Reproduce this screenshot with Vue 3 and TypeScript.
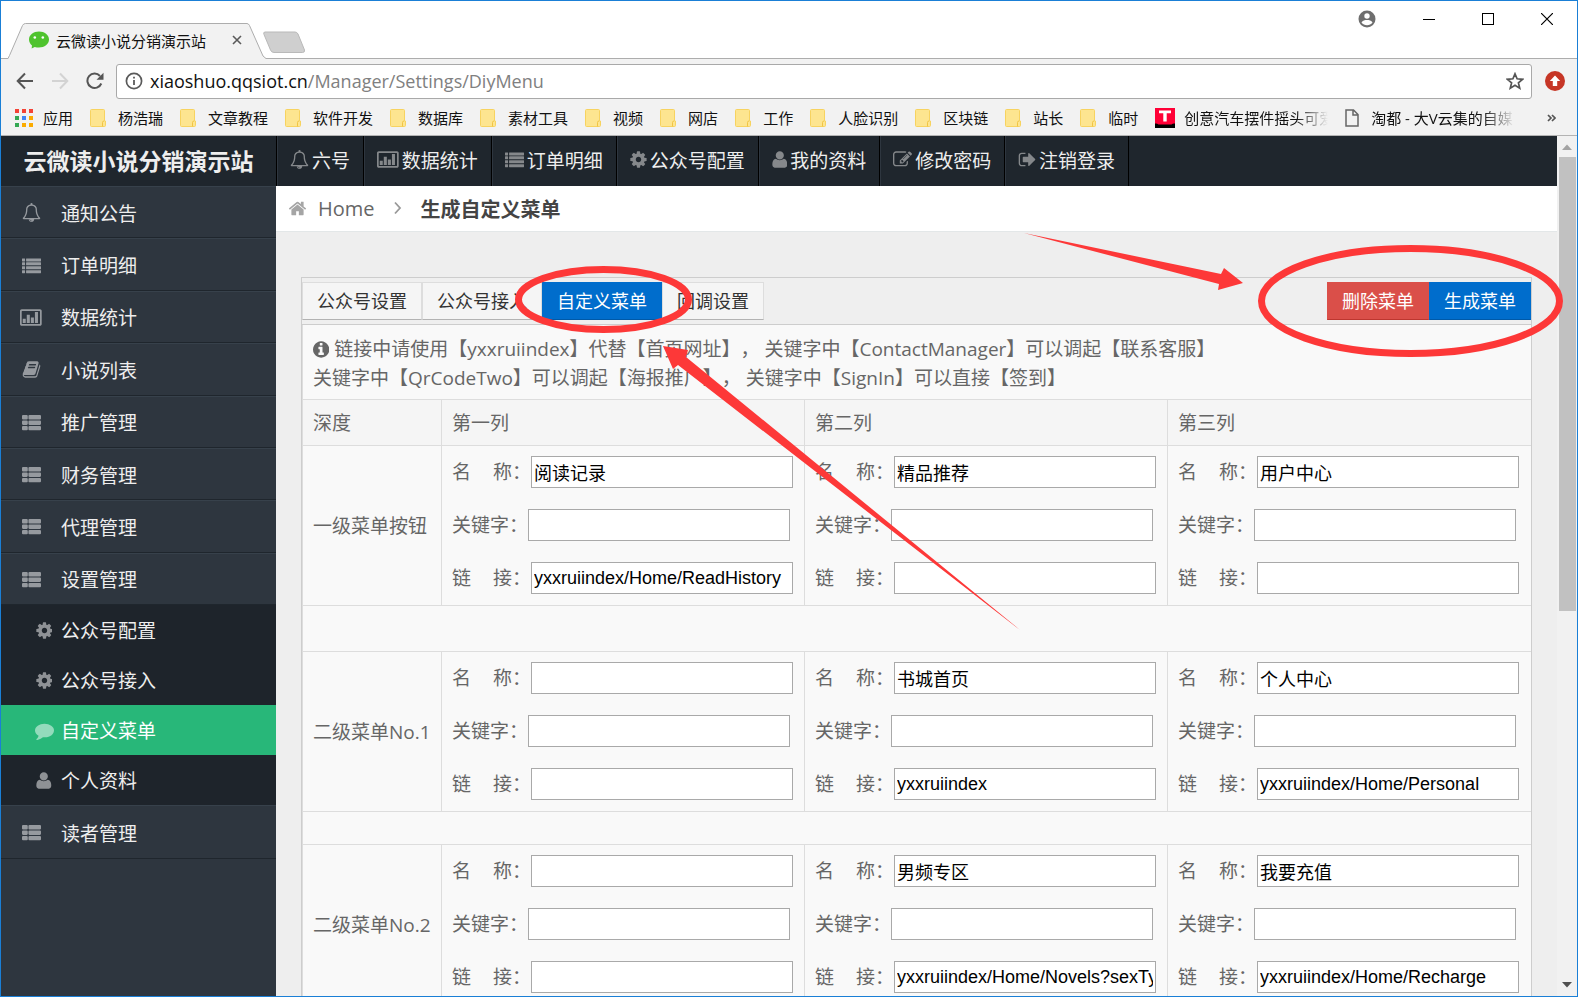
<script setup lang="ts">
import { ref } from 'vue'

interface Shape { x: number; w: number; d: string }

const icons: Record<string, Shape> = {
  bell: { x: 0, w: 1792, d: 'M912 1696q0-16-16-16-59 0-101.5-42.5t-42.5-101.5q0-16-16-16t-16 16q0 73 51.5 124.5t124.5 51.5q16 0 16-16zm-666-288h1300q-266-300-266-832 0-51-24-105t-69-103-121.5-80.5-169.5-31.5-169.5 31.5-121.5 80.5-69 103-24 105q0 532-266 832zm1482 0q0 52-38 90t-90 38h-448q0 106-75 181t-181 75-181-75-75-181h-448q-52 0-90-38t-38-90q50-42 91-88t85-119.5 74.5-158.5 50-206 19.5-260q0-152 117-282.5t307-158.5q-8-19-8-39 0-40 28-68t68-28 68 28 28 68q0 20-8 39 190 28 307 158.5t117 282.5q0 139 19.5 260t50 206 74.5 158.5 85 119.5 91 88z' },
  chart: { x: 0, w: 2048, d: 'M160 128h1728q66 0 113 47t47 113v1216q0 66-47 113t-113 47h-1728q-66 0-113-47t-47-113v-1216q0-66 47-113t113-47zm32 160q-32 0-32 32v1152q0 32 32 32h1664q32 0 32-32v-1152q0-32-32-32zm64 736h288v384h-288zm384-384h288v768h-288zm384 256h288v512h-288zm384-512h288v1024h-288z' },
  list: { x: 0, w: 1792, d: 'M32 224h224q32 0 32 32v224q0 32-32 32h-224q-32 0-32-32v-224q0-32 32-32zm384 0h1344q32 0 32 32v224q0 32-32 32h-1344q-32 0-32-32v-224q0-32 32-32zM32 594h224q32 0 32 32v224q0 32-32 32h-224q-32 0-32-32v-224q0-32 32-32zm384 0h1344q32 0 32 32v224q0 32-32 32h-1344q-32 0-32-32v-224q0-32 32-32zM32 964h224q32 0 32 32v224q0 32-32 32h-224q-32 0-32-32v-224q0-32 32-32zm384 0h1344q32 0 32 32v224q0 32-32 32h-1344q-32 0-32-32v-224q0-32 32-32zM32 1334h224q32 0 32 32v224q0 32-32 32h-224q-32 0-32-32v-224q0-32 32-32zm384 0h1344q32 0 32 32v224q0 32-32 32h-1344q-32 0-32-32v-224q0-32 32-32z' },
  thlist: { x: 0, w: 1792, d: 'M96 192h352q96 0 96 96v224q0 96-96 96h-352q-96 0-96-96v-224q0-96 96-96zm608 0h992q96 0 96 96v224q0 96-96 96h-992q-96 0-96-96v-224q0-96 96-96zM96 704h352q96 0 96 96v224q0 96-96 96h-352q-96 0-96-96v-224q0-96 96-96zm608 0h992q96 0 96 96v224q0 96-96 96h-992q-96 0-96-96v-224q0-96 96-96zM96 1216h352q96 0 96 96v224q0 96-96 96h-352q-96 0-96-96v-224q0-96 96-96zm608 0h992q96 0 96 96v224q0 96-96 96h-992q-96 0-96-96v-224q0-96 96-96z' },
  cog: { x: 96, w: 1600, d: 'M1152 896q0-106-75-181t-181-75-181 75-75 181 75 181 181 75 181-75 75-181zm512-109v222q0 12-8 23t-20 13l-185 28q-19 54-39 91 35 50 107 138 10 12 10 25t-9 23q-27 37-99 108t-94 71q-12 0-26-9l-138-108q-44 23-91 38-16 136-29 186-7 28-36 28h-222q-14 0-24.5-8.5t-11.5-21.5l-28-184q-49-16-90-37l-141 107q-10 9-25 9-14 0-25-11-126-114-165-168-7-10-7-23 0-12 8-23 15-21 51-66.5t54-70.5q-27-50-41-99l-183-27q-13-2-21-12.5t-8-23.5v-222q0-12 8-23t19-13l186-28q14-46 39-92-40-57-107-138-10-12-10-24 0-10 9-23 26-36 98.5-107.5t94.5-71.5q13 0 26 10l138 107q44-23 91-38 16-136 29-186 7-28 36-28h222q14 0 24.5 8.5t11.5 21.5l28 184q49 16 90 37l142-107q9-9 24-9 13 0 25 10 129 119 165 170 7 8 7 22 0 12-8 23-15 21-51 66.5t-54 70.5q26 50 41 98l183 28q13 2 21 12.5t8 23.5z' },
  user: { x: 160, w: 1472, d: 'M1600 1399q0 109-62.5 187t-150.5 78h-982q-88 0-150.5-78t-62.5-187q0-85 8.5-160.5t31.5-152 58.5-131 94-89 134.5-34.5q155 128 377 128t377-128q76 0 134.5 34.5t94 89 58.5 131 31.5 152 8.5 160.5zm-320-887q0 159-112.5 271.5t-271.5 112.5-271.5-112.5-112.5-271.5 112.5-271.5 271.5-112.5 271.5 112.5 112.5 271.5z' },
  edit: { x: 0, w: 1792, d: 'M888 1184l116-116-152-152-116 116v56h96v96h56zm440-720q-16-16-33 1l-350 350q-17 17-1 33t33-1l350-350q17-17 1-33zm80 594v190q0 119-84.5 203.5t-203.5 84.5h-832q-119 0-203.5-84.5t-84.5-203.5v-832q0-119 84.5-203.5t203.5-84.5h832q63 0 117 25 15 7 18 23 3 17-9 29l-49 49q-14 14-32 8-23-6-45-6h-832q-66 0-113 47t-47 113v832q0 66 47 113t113 47h832q66 0 113-47t47-113v-126q0-13 9-22l64-64q15-15 35-7t20 29zm-96-738l288 288-672 672h-288v-288zm444 132l-92 92-288-288 92-92q28-28 68-28t68 28l152 152q28 28 28 68t-28 68z' },
  signout: { x: 0, w: 1664, d: 'M704 1440q0 4 1 20t.5 26.5-3 23.5-10 19.5-20.5 6.5h-320q-119 0-203.5-84.5t-84.5-203.5v-704q0-119 84.5-203.5t203.5-84.5h320q13 0 22.5 9.5t9.5 22.5q0 4 1 20t.5 26.5-3 23.5-10 19.5-20.5 6.5h-320q-66 0-113 47t-47 113v704q0 66 47 113t113 47h312l11.5 1 11.5 3 8 5.5 7 9 2 13.5zm928-544q0 26-19 45l-544 544q-19 19-45 19t-45-19-19-45v-288h-448q-26 0-45-19t-19-45v-384q0-26 19-45t45-19h448v-288q0-26 19-45t45-19 45 19l544 544q19 19 19 45z' },
  book: { x: 0, w: 1792, d: 'M1703 478q40 57 18 129l-275 906q-19 64-76.5 107.5t-122.5 43.5h-923q-77 0-148.5-53.5t-99.5-131.5q-24-67-2-127 0-4 3-27t4-37q1-8-3-21.5t-3-19.5q2-11 8-21t16.5-23.5 16.5-23.5q23-38 45-91.5t30-91.5q3-10 .5-30t-.5-28q3-11 17-28t17-23q21-36 42-92t25-90q1-9-2.5-32t.5-28q4-13 22-30.5t22-22.5q19-26 42.5-84.5t27.5-96.5q1-8-3-25.5t-2-26.5q2-8 9-18t18-23 17-21q8-12 16.5-30.5t15-35 16-36 19.5-32 26.5-23.5 36-11.5 47.5 5.5l-1 3q38-9 51-9h761q74 0 114 56t18 130l-274 906q-36 119-71.5 153.5t-128.5 34.5h-869q-27 0-38 15-11 16-1 43 24 70 144 70h923q29 0 56-15.5t35-41.5l300-987q7-22 5-57 38 15 59 43zm-1064 2q-4 13 2 22.5t20 9.5h608q13 0 25.5-9.5t16.5-22.5l21-64q4-13-2-22.5t-20-9.5h-608q-13 0-25.5 9.5t-16.5 22.5zm-83 256q-4 13 2 22.5t20 9.5h608q13 0 25.5-9.5t16.5-22.5l21-64q4-13-2-22.5t-20-9.5h-608q-13 0-25.5 9.5t-16.5 22.5z' },
  comment: { x: 0, w: 1792, d: 'M1792 896q0 174-120 321.5t-326 233-450 85.5q-70 0-145-8-198 175-460 242-49 14-114 22-17 2-30.5-9t-17.5-29v-1q-3-4-.5-12t2-10 4.5-9.5l6-9 7-8.5 8-9q7-8 31-34.5t34.5-38 31-39.5 32.5-51 27-59 26-76q-157-89-247.5-220t-90.5-281q0-130 71-248.5t191-204.5 286-136.5 348-50.5 348 50.5 286 136.5 191 204.5 71 248.5z' },
  home: { x: 0, w: 1792, d: 'M1472 992v480q0 26-19 45t-45 19h-384v-384h-256v384h-384q-26 0-45-19t-19-45v-480q0-1 .5-3t.5-3l575-474 575 474q1 2 1 6zm223-69l-62 74q-8 9-21 11h-3q-13 0-21-7l-692-577-692 577q-12 8-24 7-13-2-21-11l-62-74q-8-10-7-23.5t11-21.5l719-599q32-26 76-26t76 26l244 204v-195q0-14 9-23t23-9h192q14 0 23 9t9 23v408l219 182q10 8 11 21.5t-7 23.5z' },
  info: { x: 128, w: 1536, d: 'M1152 1376v-160q0-14-9-23t-23-9h-96v-512q0-14-9-23t-23-9h-320q-14 0-23 9t-9 23v160q0 14 9 23t23 9h96v320h-96q-14 0-23 9t-9 23v160q0 14 9 23t23 9h448q14 0 23-9t9-23zm-128-896v-160q0-14-9-23t-23-9h-192q-14 0-23 9t-9 23v160q0 14 9 23t23 9h192q14 0 23-9t9-23zm640 416q0 209-103 385.5t-279.5 279.5-385.5 103-385.5-103-279.5-279.5-103-385.5 103-385.5 279.5-279.5 385.5-103 385.5 103 279.5 279.5 103 385.5z' },
}
const box = (name: string) => `${icons[name].x} 0 ${icons[name].w} 1792`

const folders = ['杨浩瑞', '文章教程', '软件开发', '数据库', '素材工具', '视频', '网店', '工作', '人脸识别', '区块链', '站长', '临时']
const appDots = ['#f44336', '#f44336', '#f44336', '#34a853', '#4285f4', '#fbab00', '#34a853', '#fbab00', '#fbab00']

const topNav = [
  { icon: 'bell', text: '六号' },
  { icon: 'chart', text: '数据统计' },
  { icon: 'list', text: '订单明细' },
  { icon: 'cog', text: '公众号配置' },
  { icon: 'user', text: '我的资料' },
  { icon: 'edit', text: '修改密码' },
  { icon: 'signout', text: '注销登录' },
]
const sideMain = [
  { icon: 'bell', text: '通知公告' },
  { icon: 'list', text: '订单明细' },
  { icon: 'chart', text: '数据统计' },
  { icon: 'book', text: '小说列表' },
  { icon: 'thlist', text: '推广管理' },
  { icon: 'thlist', text: '财务管理' },
  { icon: 'thlist', text: '代理管理' },
  { icon: 'thlist', text: '设置管理' },
]
const sideSub = [
  { icon: 'cog', text: '公众号配置' },
  { icon: 'cog', text: '公众号接入' },
  { icon: 'comment', text: '自定义菜单' },
  { icon: 'user', text: '个人资料' },
]
const activeSub = ref('自定义菜单')

const tabs = ['公众号设置', '公众号接入', '自定义菜单', '回调设置']
const activeTab = ref('自定义菜单')

const fields = [
  { key: 'name', parts: ['名', '称：'] },
  { key: 'word', parts: ['关键字：'] },
  { key: 'link', parts: ['链', '接：'] },
] as const

interface Entry { name: string; word: string; link: string }
interface Level { title: string; gap: 'none' | 'tall' | 'short'; cells: Entry[] }

const levels = ref<Level[]>([
  {
    title: '一级菜单按钮', gap: 'none', cells: [
      { name: '阅读记录', word: '', link: 'yxxruiindex/Home/ReadHistory' },
      { name: '精品推荐', word: '', link: '' },
      { name: '用户中心', word: '', link: '' },
    ],
  },
  {
    title: '二级菜单No.1', gap: 'tall', cells: [
      { name: '', word: '', link: '' },
      { name: '书城首页', word: '', link: 'yxxruiindex' },
      { name: '个人中心', word: '', link: 'yxxruiindex/Home/Personal' },
    ],
  },
  {
    title: '二级菜单No.2', gap: 'short', cells: [
      { name: '', word: '', link: '' },
      { name: '男频专区', word: '', link: 'yxxruiindex/Home/Novels?sexType=1' },
      { name: '我要充值', word: '', link: 'yxxruiindex/Home/Recharge' },
    ],
  },
])
</script>

<template>
  <div class="window">
    <div class="strip">
      <div class="tab">
        <svg class="tab-shape" width="258" height="36" viewBox="0 0 258 36">
          <path d="M0 36V35.500L1.500 32.500L14.500 2.500Q15.500 .5 17.500 .5H239Q240.500 .5 241.500 2.500L255 33L258 35.500V36Z" fill="#f2f2f2" />
          <path d="M0 35.500L1.500 32.500L14.500 2.500Q15.500 .5 17.500 .5H239Q240.500 .5 241.500 2.500L255 33L258 35.500" fill="none" stroke="#adadad" />
        </svg>
        <svg class="favicon" width="20" height="18" viewBox="0 0 20 18">
          <path d="M10 0.500C4.500 .5 0 4 0 8.500c0 2.500 1.200 4.400 3 5.900L2.600 17.500l3.200-1.600c1.300.4 2.700.6 4.200.6 5.500 0 10-3.500 10-8S15.500 .5 10 .5z" fill="#4fc32e" />
          <circle cx="5.800" cy="6.500" r="1.300" fill="#fff" /><circle cx="13.800" cy="6.500" r="1.300" fill="#fff" />
        </svg>
        <span class="tab-title">云微读小说分销演示站</span>
        <button class="bare" aria-label="关闭标签页">
          <svg width="10" height="10" viewBox="0 0 10 10"><path d="M1 1l8 8M9 1L1 9" stroke="#5a5a5a" stroke-width="1.600" /></svg>
        </button>
      </div>
      <button class="bare new-tab" aria-label="新标签页">
        <svg width="44" height="24" viewBox="0 0 44 24"><path d="M3 1H33Q35 1 36 3L42.500 19Q43 21.500 40.500 21.500H12Q9.500 21.500 8.500 19L2 3.500Q1 1 3 1Z" fill="#cfcfcf" stroke="#b9b9b9" /></svg>
      </button>
      <div class="controls">
        <button class="bare" aria-label="用户">
          <svg width="18" height="18" viewBox="0 0 18 18"><circle cx="9" cy="9" r="8.500" fill="#6e6e6e" /><circle cx="9" cy="6" r="2.700" fill="#fff" /><path d="M3.500 12.500C4.500 10.500 7 10 9 10s4.500.5 5.500 2.500C13.200 14.300 11.200 15.300 9 15.300S4.800 14.300 3.500 12.500z" fill="#fff" /></svg>
        </button>
        <button class="bare" aria-label="最小化"><svg width="12" height="12" viewBox="0 0 12 12"><path d="M0 6.500H12" stroke="#000" /></svg></button>
        <button class="bare" aria-label="最大化"><svg width="12" height="12" viewBox="0 0 12 12"><rect x=".5" y=".5" width="11" height="11" fill="none" stroke="#000" /></svg></button>
        <button class="bare" aria-label="关闭"><svg width="12" height="12" viewBox="0 0 12 12"><path d="M0 0L12 12M12 0L0 12" stroke="#000" stroke-width="1.200" /></svg></button>
      </div>
    </div>

    <div class="toolbar">
      <button class="bare" aria-label="后退"><svg width="18" height="18" viewBox="0 0 18 18"><path d="M17 9H2M9 1.500L1.700 9 9 16.500" fill="none" stroke="#555" stroke-width="2" /></svg></button>
      <button class="bare" aria-label="前进"><svg width="18" height="18" viewBox="0 0 18 18"><path d="M1 9H16M9 1.500L16.300 9 9 16.500" fill="none" stroke="#d3d3d3" stroke-width="2" /></svg></button>
      <button class="bare" aria-label="重新加载"><svg width="18" height="18" viewBox="0 0 18 18"><path d="M15.300 11.500A7.200 7.200 0 1 1 14 4" fill="none" stroke="#555" stroke-width="2" /><path d="M17.500 .8V7.800H10.500Z" fill="#555" /></svg></button>
      <div class="address">
        <svg width="18" height="18" viewBox="0 0 18 18"><circle cx="9" cy="9" r="7.600" fill="none" stroke="#5a5a5a" stroke-width="1.700" /><path d="M9 8v5M9 4.800v1.800" stroke="#5a5a5a" stroke-width="1.800" /></svg>
        <span class="url">xiaoshuo.qqsiot.cn<span class="path">/Manager/Settings/DiyMenu</span></span>
        <button class="bare" aria-label="收藏"><svg width="18" height="18" viewBox="0 0 18 18"><path d="M9 1.800l2.100 5 5.400.5-4.100 3.500 1.300 5.300L9 13.200l-4.700 2.900 1.300-5.300L1.500 7.300l5.400-.5z" fill="none" stroke="#555" stroke-width="1.700" /></svg></button>
      </div>
      <button class="bare" aria-label="更新"><svg width="20" height="20" viewBox="0 0 20 20"><circle cx="10" cy="10" r="10" fill="#c63626" /><path d="M10 4.500l5.200 5.500h-3v5H7.800v-5h-3z" fill="#fff" /></svg></button>
    </div>

    <div class="bookmarks">
      <a class="mark apps" href="#">
        <span class="dots"><i v-for="(c, i) in appDots" :key="i" :style="{ background: c }"></i></span>应用
      </a>
      <a v-for="f in folders" :key="f" class="mark" href="#">
        <svg width="16" height="18" viewBox="0 0 16 18"><path d="M1.500 .5H13.500Q14.500 .5 14.500 1.500V12h1v4.500q0 1-1 1H1.500q-1 0-1-1V1.500q0-1 1-1z" fill="#fde590" stroke="#f7d360" /><path d="M12.500 17.500V13.500Q12.500 12 14 12" fill="none" stroke="#f0c445" /></svg>{{ f }}
      </a>
      <a class="mark site" href="#">
        <svg width="20" height="20" viewBox="0 0 20 20"><rect width="20" height="20" fill="#ff0036" /><path d="M0 15.500Q2 15 3.500 16.500H16.500Q18 15 20 15.500V20H0z" fill="#000" /><path d="M4 2.500H16V5.300H11.700V13.500H8.300V5.300H4z" fill="#fff" /></svg><span class="fade long">创意汽车摆件摇头可爱</span>
      </a>
      <a class="mark site doc" href="#">
        <svg width="14" height="18" viewBox="0 0 14 18"><path d="M1 1H8.500L13 5.500V17H1zM8 1V6H13" fill="none" stroke="#666" stroke-width="1.500" /></svg><span class="fade">淘都 - 大V云集的自媒</span>
      </a>
      <button class="bare more" aria-label="更多书签"><svg width="9" height="8" viewBox="0 0 9 8"><path d="M1 1l3 3-3 3M5 1l3 3-3 3" fill="none" stroke="#555" stroke-width="1.700" /></svg></button>
    </div>

    <div class="viewport">
      <div class="page">
        <aside class="side">
          <h1 class="brand">云微读小说分销演示站</h1>
          <nav class="main-list">
            <a v-for="m in sideMain" :key="m.text" class="side-item" href="#">
              <span class="slot"><svg class="fa" :viewBox="box(m.icon)"><path :d="icons[m.icon].d" fill-rule="evenodd" /></svg></span>{{ m.text }}
            </a>
          </nav>
          <nav class="sub-list">
            <a v-for="s in sideSub" :key="s.text" class="sub-item" :class="{ on: s.text === activeSub }" href="#" @click.prevent="activeSub = s.text">
              <span class="slot"><svg class="fa" :viewBox="box(s.icon)"><path :d="icons[s.icon].d" /></svg></span>{{ s.text }}
            </a>
          </nav>
          <a class="side-item last" href="#">
            <span class="slot"><svg class="fa" :viewBox="box('thlist')"><path :d="icons.thlist.d" /></svg></span>读者管理
          </a>
        </aside>

        <div class="body">
          <nav class="top">
            <a v-for="n in topNav" :key="n.text" class="top-item" href="#">
              <svg class="fa" :viewBox="box(n.icon)"><path :d="icons[n.icon].d" fill-rule="evenodd" /></svg>{{ n.text }}
            </a>
          </nav>
          <div class="crumb">
            <a class="home" href="#"><svg class="fa" :viewBox="box('home')"><path :d="icons.home.d" /></svg>Home</a>
            <svg width="8" height="14" viewBox="0 0 8 14"><path d="M1 1.500l5 5.500-5 5.500" fill="none" stroke="#999" stroke-width="1.800" /></svg>
            <strong>生成自定义菜单</strong>
          </div>

          <main class="panel">
            <div class="bar">
              <div class="group">
                <button v-for="t in tabs" :key="t" class="btn" :class="{ primary: t === activeTab }" @click="activeTab = t">{{ t }}</button>
              </div>
              <div class="group">
                <button class="btn danger">删除菜单</button>
                <button class="btn primary">生成菜单</button>
              </div>
            </div>
            <table>
              <colgroup><col class="c0" /><col /><col /><col /></colgroup>
              <thead>
                <tr>
                  <td colspan="4" class="tip">
                    <svg class="fa" :viewBox="box('info')"><path :d="icons.info.d" /></svg> 链接中请使用【yxxruiindex】代替【首页网址】， 关键字中【ContactManager】可以调起【联系客服】<br />关键字中【QrCodeTwo】可以调起【海报推广】， 关键字中【SignIn】可以直接【签到】
                  </td>
                </tr>
                <tr class="cols"><th>深度</th><th>第一列</th><th>第二列</th><th>第三列</th></tr>
              </thead>
              <tbody v-for="(lv, r) in levels" :key="lv.title">
                <tr v-if="lv.gap !== 'none'" :class="lv.gap"><td colspan="4" class="empty"></td></tr>
                <tr>
                  <th>{{ lv.title }}</th>
                  <td v-for="(cell, c) in lv.cells" :key="c">
                    <div class="fields">
                      <div v-for="f in fields" :key="f.key" class="field">
                        <label :for="`${f.key}-${r}-${c}`"><span v-for="p in f.parts" :key="p">{{ p }}</span></label>
                        <input :id="`${f.key}-${r}-${c}`" v-model="cell[f.key]" type="text" />
                      </div>
                    </div>
                  </td>
                </tr>
              </tbody>
            </table>
          </main>
        </div>
      </div>

      <div class="scroll">
        <svg width="10" height="6" viewBox="0 0 10 6"><path d="M0 6L5 0.500 10 6z" fill="#a3a3a3" /></svg>
        <div class="track"><div class="thumb"></div></div>
        <svg width="10" height="6" viewBox="0 0 10 6"><path d="M0 0L5 5.500 10 0z" fill="#505050" /></svg>
      </div>
    </div>

    <svg class="marks" width="1578" height="997" viewBox="0 0 1578 997" aria-hidden="true">
      <g fill="none" stroke="#fd3838" stroke-width="7">
        <ellipse cx="603.500" cy="299.500" rx="85" ry="30" />
        <ellipse cx="1410.500" cy="301" rx="149" ry="52.500" />
      </g>
      <path d="M1024 233L1221 274 1224 268 1243 283 1218 290 1219 284Z" fill="#fd3838" />
      <path d="M663 346L688 350 686 357 1020 630 678 365 673 369Z" fill="#fd3838" />
    </svg>
  </div>
</template>

<style>
body { margin: 0; background: #fff; }
</style>

<style scoped>
.window {
  position: relative;
  display: flex;
  flex-direction: column;
  box-sizing: border-box;
  height: 100vh;
  overflow: hidden;
  border: 1px solid #1a7fd6;
  background: #fff;
  font-family: "Open Sans", "Noto Sans CJK SC", sans-serif;
  font-size: 19px;
  color: #666;
}
.window *, .window *::before { box-sizing: border-box; }
svg { display: block; flex: none; }
a { color: inherit; text-decoration: none; }
.bare { display: flex; padding: 0; border: 0; background: none; }
.fa { height: 19px; fill: currentColor; }

.strip { display: flex; flex: none; height: 58px; padding: 22px 0 0 7px; box-shadow: inset 0 -1px #adadad; }
.tab { position: relative; display: flex; align-items: center; width: 258px; height: 36px; padding: 0 24px 2px 21px; font-size: 15px; color: #111; }
.tab-shape { position: absolute; inset: 0; }
.favicon, .tab-title, .tab .bare { position: relative; }
.tab-title { flex: 1; padding-left: 7px; }
.new-tab { align-self: flex-start; padding-top: 8px; margin-left: -4px; }
.controls { display: flex; align-items: center; height: 20px; margin: -14px 24px 0 auto; gap: 47px; }

.toolbar { display: flex; flex: none; align-items: center; gap: 17px; height: 46px; padding: 0 12px 2px 15px; background: #f2f2f2; }
.address { display: flex; flex: 1; align-items: center; height: 35px; padding: 0 7px 0 8px; margin-left: -5px; margin-right: -4px; border: 1px solid #a9a9a9; border-radius: 3px; background: #fff; }
.url { flex: 1; padding-left: 7px; font-size: 18px; color: #111; }
.path { color: #808080; }

.bookmarks { display: flex; flex: none; align-items: center; gap: 17px; height: 31px; padding: 0 30px 4px 14px; border-bottom: 1px solid #b3b3b3; background: #f2f2f2; font-size: 15px; line-height: 20px; color: #111; white-space: nowrap; }
.mark { display: flex; align-items: center; gap: 12px; }
.mark.apps { gap: 9px; }
.mark.site { gap: 9px; }
.mark.doc { gap: 12px; }
.dots { display: grid; grid-template-columns: repeat(3, 4px); gap: 3px; padding-right: 1px; }
.dots i { height: 4px; }
.fade { mask-image: linear-gradient(to right, #000 112px, transparent 144px); }
.fade.long { margin-right: -6px; }
.more { margin-left: auto; margin-right: -9px; }

.viewport { display: flex; flex: 1; min-height: 0; }
.page { display: flex; flex: 1; min-width: 0; overflow: hidden; background: #2e363f; }
.side { flex: none; width: 275px; color: #eee; }
.brand { display: flex; align-items: center; justify-content: center; height: 50px; margin: 0; background: #1f262d; font-size: 23px; font-weight: 700; line-height: 30px; color: #eee; }
.main-list { display: grid; grid-auto-rows: 1fr; height: 419px; }
.side-item { display: flex; align-items: center; padding-top: 1px; border-top: 1px solid #37414b; border-bottom: 1px solid #1f262d; }
.slot { display: flex; justify-content: center; width: 60px; color: #969a9f; }
.side-item.last { height: 54px; }
.sub-list { background: #1e242b; }
.sub-item { display: flex; align-items: center; height: 50px; }
.sub-item .slot { padding-left: 26px; color: #8e9195; }
.sub-item.on { background: #28b779; color: #fff; }
.sub-item.on .slot { color: #93dbbc; }

.body { flex: 1; min-width: 0; background: #eee; }
.top { display: flex; height: 50px; background: #1f262d; color: #eee; border-left: 1px solid #000; }
.top-item { display: flex; align-items: center; gap: 3px; padding: 0 13px 3px 12px; border-left: 1px solid #2e363f; border-right: 1px solid #000; }
.top-item .fa { color: #85888b; }
.crumb { display: flex; align-items: center; gap: 19px; height: 46px; padding: 0 12px 1px; border-bottom: 1px solid #e3e7e8; background: #fff; font-size: 20px; }
.crumb .home { display: flex; align-items: center; gap: 11px; }
.crumb .fa { color: #a5a5a5; }
.crumb strong { color: #444; }

.panel { margin: 45px 25px 0; border: 1px solid #cdcdcd; background: #f9f9f9; }
.bar { display: flex; justify-content: space-between; padding: 4px 0; border-bottom: 1px solid #cdcdcd; background: #efefef; }
.group { display: flex; }
.btn { height: 38px; padding: 0 14px; border: 1px solid #ddd; border-bottom-color: #b3b3b3; border-radius: 0; background: #f5f5f5; color: #333; font-family: inherit; font-size: 18px; line-height: 24px; }
.btn.primary { border-color: #006dcc #006dcc #0059a8; background: #006dcc; color: #fff; }
.btn.danger { border-color: #da4f49 #da4f49 #bd362f; background: #da4f49; color: #fff; }

table { width: 100%; table-layout: fixed; border-collapse: separate; border-spacing: 0; border-left: 1px solid #ddd; line-height: 29px; }
.c0 { width: 139px; }
th, td { padding: 0 0 0 10px; border-right: 1px solid #ddd; border-bottom: 1px solid #ddd; font-weight: 400; text-align: left; white-space: nowrap; }
th { padding-top: 2px; }
th:last-child, td:last-child { border-right: 0; }
.tip { height: 75px; padding-top: 10px; padding-bottom: 6px; text-spacing-trim: space-all; }
.tip .fa { display: inline-block; vertical-align: -3px; }
.cols th { height: 46px; background: #f5f5f5; }
.tall .empty { height: 46px; }
.short .empty { height: 33px; }
.fields { display: grid; gap: 21px; padding: 10px 0 11px; }
.field { display: flex; height: 32px; padding-right: 10px; }
label { display: flex; gap: 22px; line-height: 32px; }
input { width: 262px; height: 32px; padding: 0 2px; border: 1px solid #a9a9a9; border-radius: 0; background: #fff; color: #000; font-family: "Liberation Sans", "Noto Sans CJK SC", sans-serif; font-size: 18px; }

.scroll { display: flex; flex: none; flex-direction: column; align-items: center; width: 20px; padding: 8px 0 8px; background: #f1f1f1; }
.track { flex: 1; width: 17px; margin: 7px 0; }
.thumb { height: 55.5%; background: #c1c1c1; }
.marks { position: absolute; top: -1px; left: -1px; pointer-events: none; }
</style>
